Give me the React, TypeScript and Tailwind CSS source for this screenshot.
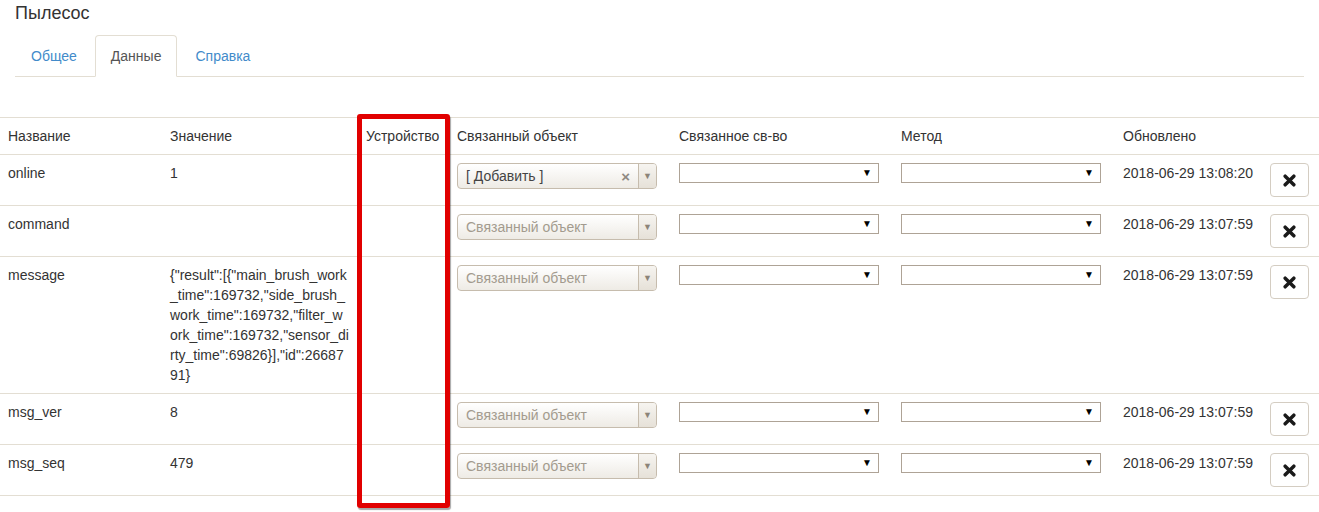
import React from 'react';

type Row = { name: string; value: string; linked?: string; updated: string };

const rows: Row[] = [
  { name: 'online', value: '1', linked: '[ Добавить ]', updated: '2018-06-29 13:08:20' },
  { name: 'command', value: '', updated: '2018-06-29 13:07:59' },
  {
    name: 'message',
    value:
      '{"result":[{"main_brush_work_time":169732,"side_brush_work_time":169732,"filter_work_time":169732,"sensor_dirty_time":69826}],"id":2668791}',
    updated: '2018-06-29 13:07:59',
  },
  { name: 'msg_ver', value: '8', updated: '2018-06-29 13:07:59' },
  { name: 'msg_seq', value: '479', updated: '2018-06-29 13:07:59' },
];

function LinkedObject({ value }: { value?: string }) {
  return (
    <div className="flex h-[26px] w-[200px] overflow-hidden rounded-[4px] border border-[#c6bcad] bg-gradient-to-b from-white to-[#eeebe5]">
      <div className="flex flex-1 items-center pl-2 pr-2">
        {value ? (
          <>
            <span className="flex-1 text-[#444]">{value}</span>
            <span className="text-[15px] font-bold leading-none text-[#8f8a82]">×</span>
          </>
        ) : (
          <span className="text-[#a39b8e]">Связанный объект</span>
        )}
      </div>
      <div className="flex w-[18px] items-center justify-center border-l border-[#c6bcad] bg-gradient-to-b from-[#f6f4f0] to-[#e6e1d8]">
        <span className="text-[9px] leading-none text-[#8c8478]">▼</span>
      </div>
    </div>
  );
}

function PlainSelect() {
  return (
    <div className="flex h-[20px] w-[200px] items-center justify-end border border-[#aea396] bg-white pr-[6px]">
      <span className="text-[10px] leading-none text-black">▼</span>
    </div>
  );
}

function DeleteButton() {
  return (
    <button
      type="button"
      className="flex h-[34px] w-[39px] items-center justify-center rounded-[4px] border border-[#d4cdc2] bg-white"
    >
      <svg width="13" height="13" viewBox="0 0 12 12">
        <path d="M2 2 L10 10 M10 2 L2 10" stroke="#1a1a1a" strokeWidth="3.2" strokeLinecap="round" />
      </svg>
    </button>
  );
}

export default function App() {
  const th = 'border-t border-[#e3ded3] px-2 py-2 text-left font-normal align-top';
  const td = 'border-t border-[#e3ded3] px-2 py-2 align-top';

  return (
    <div className="relative min-h-[512px] bg-white text-[14px] leading-[20px] text-[#333]" style={{ fontFamily: '"Liberation Sans", Arial, sans-serif' }}>
      <div className="px-[15px] pt-[3px]">
        <h4 className="text-[18px] leading-[20px] text-[#333]">Пылесос</h4>
        <ul className="mt-[12px] flex border-b border-[#e3ded3]">
          <li className="-mb-px mr-[2px]">
            <a className="block rounded-t-[4px] border border-transparent px-[15px] py-[10px] text-[#428bca]">Общее</a>
          </li>
          <li className="-mb-px mr-[2px]">
            <a className="block rounded-t-[4px] border border-[#e3ded3] border-b-white bg-white px-[15px] py-[10px] text-[#555]">
              Данные
            </a>
          </li>
          <li className="-mb-px mr-[2px]">
            <a className="block rounded-t-[4px] border border-transparent px-[15px] py-[10px] text-[#428bca]">Справка</a>
          </li>
        </ul>
      </div>

      <table className="mt-[40px] w-full table-fixed border-collapse border-b border-[#e3ded3]">
        <colgroup>
          <col className="w-[162px]" />
          <col className="w-[196px]" />
          <col className="w-[91px]" />
          <col className="w-[222px]" />
          <col className="w-[222px]" />
          <col className="w-[222px]" />
          <col className="w-[147px]" />
          <col className="w-[57px]" />
        </colgroup>
        <thead>
          <tr>
            <th className={th}>Название</th>
            <th className={th}>Значение</th>
            <th className={th}>Устройство</th>
            <th className={th}>Связанный объект</th>
            <th className={th}>Связанное св-во</th>
            <th className={th}>Метод</th>
            <th className={th}>Обновлено</th>
            <th className={th}></th>
          </tr>
        </thead>
        <tbody>
          {rows.map((row) => (
            <tr key={row.name}>
              <td className={td}>{row.name}</td>
              <td className={`${td} break-all`}>{row.value}</td>
              <td className={td}></td>
              <td className={td}>
                <LinkedObject value={row.linked} />
              </td>
              <td className={td}>
                <PlainSelect />
              </td>
              <td className={td}>
                <PlainSelect />
              </td>
              <td className={td}>{row.updated}</td>
              <td className={td}>
                <DeleteButton />
              </td>
            </tr>
          ))}
        </tbody>
      </table>

      <div className="pointer-events-none absolute left-[357px] top-[114px] h-[394px] w-[93px] rounded-[3px] border-[5px] border-[#e10000] shadow-[1px_2px_1px_rgba(0,0,0,0.35)]" />
    </div>
  );
}
